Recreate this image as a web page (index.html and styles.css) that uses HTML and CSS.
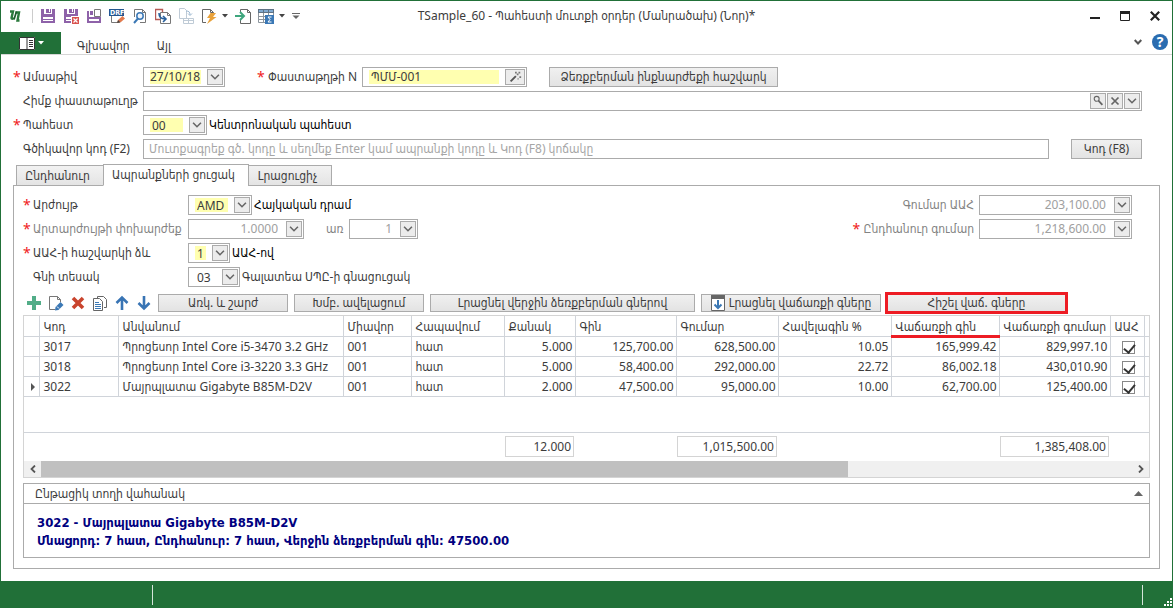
FILE: index.html
```html
<!DOCTYPE html>
<html lang="hy">
<head>
<meta charset="utf-8">
<meta name="viewport" content="width=device-width, initial-scale=1">
<title>TSample_60 - Պահեստի մուտքի օրդեր</title>
<link rel="stylesheet" href="styles.css">
</head>
<body>
<svg class="defs" aria-hidden="true">
  <symbol id="chev" viewBox="0 0 16 16"><path d="M3.500 5.500 8 10l4.500-4.500" fill="none" stroke="#666" stroke-width="1.800"/></symbol>
  <symbol id="floppy" viewBox="0 0 16 16"><path fill="#8e62a9" d="M1 1h3v5h8V1h3v14H1zM6 1h5v4H6z"/><path fill="#fff" d="M3 9h10v4H3zM9 1h1v3H9z"/><path stroke="#8e62a9" d="M3 11.500h10"/></symbol>
</svg>
<div class="window">
  <header class="titlebar">
    <div class="quick">
      <svg class="icon logo" viewBox="0 0 16 16"><path d="M3 3.500h3L4.500 10c0 1 1.500 1 2.500 0M8.500 4.500h3.500L10.500 12.500h2" fill="none" stroke="#2b7a3c" stroke-width="2.400"/><path d="m9.500 3.500-2.500 8" stroke="#1d5d2c" stroke-width="1.800"/></svg>
      <span class="sep"></span>
      <button class="tool" aria-label="Save"><svg class="icon"><use href="#floppy"/></svg></button>
      <button class="tool" aria-label="Save and close"><svg class="icon" viewBox="0 0 16 16"><use href="#floppy"/><path fill="#fff" d="M8 8h8v8H8z"/><path fill="#d9534f" d="M9 9h7v7H9z"/><path d="m10.500 10.500 4 4m0-4-4 4" stroke="#fff" stroke-width="1.200"/></svg></button>
      <button class="tool" aria-label="Save and new"><svg class="icon" viewBox="0 0 16 16"><path fill="#8e62a9" d="M1 3h2v6h12v6H1zM4 3h3v4H4z"/><path fill="#fff" d="M3 11h10v2H3z"/><path d="M8.500 1.500h6v7h-6z" fill="#fff" stroke="#777"/></svg></button>
      <button class="tool" aria-label="Draft"><svg class="icon" viewBox="0 0 16 16"><path d="M2.500 8v6.500h6" fill="none" stroke="#777"/><path fill="#24568f" d="M0 1h15v7H0z"/><text class="drf" x="1" y="7">DRF</text><path d="m8 15 1-3 4.500-4 2.500 2.500L12 14z" fill="#e27a4d"/><path d="m8 15 1-3 2.500 2.500z" fill="#444"/></svg></button>
      <button class="tool" aria-label="Preview"><svg class="icon" viewBox="0 0 16 16"><path d="M2.500 9V1.500h8l3 3v10H8" fill="#fff" stroke="#777"/><path d="M10.500 1.500v3h3" fill="none" stroke="#777"/><circle cx="8" cy="8" r="3.200" fill="#eef4fb" stroke="#3b78b5" stroke-width="1.500"/><path d="m6 10.500-4 4.500" stroke="#3b78b5" stroke-width="2"/></svg></button>
      <button class="tool" aria-label="Copy document"><svg class="icon" viewBox="0 0 16 16"><path d="M5 11.500H.5v-10h7V4" fill="none" stroke="#b65a55" stroke-width="1.400"/><path d="M5.500 4.500h7l3 3v8h-10z" fill="#fff" stroke="#777"/><path d="M12.500 4.500v3h3" fill="none" stroke="#777"/><path d="M4 5c0 4 2 6 6 6M8 8l3 3-3 3" fill="none" stroke="#28609c" stroke-width="1.600"/></svg></button>
      <button class="tool" aria-label="Linked documents" disabled><svg class="icon" viewBox="0 0 16 16"><g fill="none" stroke="#bfcbd6"><path d="M1.500 10.500v-10h5l2 2v8zM5.500 10.500h10v5h-10zM6 12.500h9M10.500 10v5"/><path d="M8 3c3 0 4 1 4 4m-2-1.500 2 2 2-2" stroke="#9eb9d2"/></g></svg></button>
      <button class="tool" aria-label="Actions"><svg class="icon" viewBox="0 0 16 16"><path d="M5 14.500H1.500V1.500h8l3 3v2" fill="#fff" stroke="#666"/><path d="M9.500 1.500v3h3" fill="none" stroke="#666"/><path d="M9.500 5H15l-3 4h3.500L6 16l3-6H6z" fill="#e9a23b"/></svg></button>
      <button class="arrow" aria-label="More actions"><svg class="caret" viewBox="0 0 6 4"><path d="M0 0h6L3 3.500z" fill="#444"/></svg></button>
      <button class="tool" aria-label="Export"><svg class="icon" viewBox="0 0 16 16"><path d="M5.500 4V1.500h7l3 3v11h-10V12" fill="none" stroke="#666"/><path d="M12.500 1.500v3h3" fill="none" stroke="#666"/><path d="M0 8h9M5 4l4 4-4 4" fill="none" stroke="#3ea67d" stroke-width="2"/></svg></button>
      <button class="tool" aria-label="Totals"><svg class="icon" viewBox="0 0 16 16"><path fill="#5f7284" d="M0 1h16v4H0z"/><path fill="none" stroke="#8d969e" d="M.5 5v9.500H7M1 8.500h6M1 11.500h6M5.500 5v9.500M10.500 5v2M15.500 5v2"/><path fill="#7fa9d0" d="M1 2h4v2H1zM6 2h4v2H6zM11 2h4v2h-4z"/><path fill="#3b78b5" d="M7 7h9v9H7z"/><path d="M13.500 9H10l2 2.500L10 14h3.500" fill="none" stroke="#fff"/></svg></button>
      <button class="arrow" aria-label="More totals"><svg class="caret" viewBox="0 0 6 4"><path d="M0 0h6L3 3.500z" fill="#444"/></svg></button>
      <button class="arrow" aria-label="Customize"><svg class="more" viewBox="0 0 8 6"><path d="M0 .5h8" stroke="#666"/><path d="M.5 2.500h7L4 6z" fill="#666"/></svg></button>
    </div>
    <h1 class="title">TSample_60 - Պահեստի մուտքի օրդեր (Մանրածախ) (Նոր)*</h1>
    <div class="winbtns">
      <button class="win" aria-label="Minimize"><svg viewBox="0 0 10 10"><path d="M0 6h10v2H0z" fill="#222"/></svg></button>
      <button class="win" aria-label="Maximize"><svg viewBox="0 0 10 10"><path d="M.5.5h9v9h-9z" fill="none" stroke="#222"/><path d="M0 0h10v3H0z" fill="#222"/></svg></button>
      <button class="win" aria-label="Close"><svg viewBox="0 0 10 10"><path d="m.8.8 8.400 8.400m0-8.400L.8 9.200" stroke="#222" stroke-width="2.200"/></svg></button>
    </div>
  </header>
  <nav class="ribbon">
    <button class="filemenu" aria-label="Menu"><svg viewBox="0 0 16 13"><path d="M0 0h16v13H0z" fill="#fff"/><path d="M8 0v13M10 3.500h4M10 5.500h4M10 7.500h4M10 9.500h4" stroke="#333" stroke-width="1"/><path d="M.5.5h15v12H.5z" fill="none" stroke="#333"/></svg><svg class="caret" viewBox="0 0 6 4"><path d="M0 0h6L3 3.500z" fill="#fff"/></svg></button>
    <a class="ribtab" href="#main">Գլխավոր</a>
    <a class="ribtab" href="#other">Այլ</a>
    <div class="ribright">
      <button class="plain" aria-label="Expand"><svg class="down" viewBox="0 0 8 7"><path d="m.7 1 3.300 3.500L7.300 1" fill="none" stroke="#555" stroke-width="2"/></svg></button>
      <button class="plain help" aria-label="Help">?</button>
    </div>
  </nav>
  <main class="content">
    <div class="form">
      <div class="row">
        <label class="lab req" for="date">Ամսաթիվ</label>
        <div class="combo w-date"><input class="val hot" id="date" value="27/10/18"><button class="drop" aria-label="Open"><svg><use href="#chev"/></svg></button></div>
        <label class="lab req doclab" for="num">Փաստաթղթի N</label>
        <div class="combo w-num"><input class="val hot wide" id="num" value="ՊՄՄ-001"><button class="drop wand" aria-label="Generate"><svg viewBox="0 0 16 16"><path d="m3 13 6-6" stroke="#555" stroke-width="2.200"/><path d="M8 2h2v2H8zM12 2h2v2h-2zM10 4h2v2h-2zM13 7h2v2h-2zM11 9h1v2h-1z" fill="#777"/></svg></button></div>
        <button class="btn cost">Ձեռքբերման ինքնարժեքի հաշվարկ</button>
      </div>
      <div class="row">
        <label class="lab" for="base">Հիմք փաստաթուղթ</label>
        <div class="combo grow"><input class="val" id="base"><button class="drop" aria-label="Search"><svg viewBox="0 0 16 16"><circle cx="6.500" cy="5.500" r="2.800" fill="none" stroke="#666" stroke-width="1.300"/><path d="m8.500 7.500 4.500 5" stroke="#666" stroke-width="2"/></svg></button><button class="drop" aria-label="Clear"><svg viewBox="0 0 16 16"><path d="m4 4 8 8m0-8-8 8" stroke="#666" stroke-width="2"/></svg></button><button class="drop" aria-label="Open"><svg><use href="#chev"/></svg></button></div>
      </div>
      <div class="row">
        <label class="lab req" for="store">Պահեստ</label>
        <div class="combo w-store"><select class="val hot" id="store"><option>00</option></select><button class="drop" aria-label="Open"><svg><use href="#chev"/></svg></button></div>
        <span class="desc">Կենտրոնական պահեստ</span>
      </div>
      <div class="row">
        <label class="lab" for="code">Գծիկավոր կոդ (F2)</label>
        <div class="combo grow"><input class="val" id="code" placeholder="Մուտքագրեք գծ. կոդը և սեղմեք Enter կամ ապրանքի կոդը և Կոդ (F8) կոճակը"></div>
        <button class="btn codebtn">Կոդ (F8)</button>
      </div>
    </div>
    <div class="tabs" role="tablist">
      <button class="tab" role="tab">Ընդհանուր</button>
      <button class="tab on" role="tab" aria-selected="true">Ապրանքների ցուցակ</button>
      <button class="tab" role="tab">Լրացուցիչ</button>
    </div>
    <section class="panel">
      <div class="fields">
        <div class="stack">
          <div class="row">
            <label class="lab req" for="cur">Արժույթ</label>
            <div class="combo w-cur"><select class="val hot" id="cur"><option>AMD</option></select><button class="drop" aria-label="Open"><svg><use href="#chev"/></svg></button></div>
            <span class="desc">Հայկական դրամ</span>
          </div>
          <div class="row">
            <label class="lab req dim" for="rate">Արտարժույթի փոխարժեք</label>
            <div class="combo w-rate"><input class="val num" id="rate" value="1.0000" disabled><button class="drop" aria-label="Open"><svg><use href="#chev"/></svg></button></div>
            <label class="per" for="per">առ</label>
            <div class="combo w-per"><input class="val num" id="per" value="1" disabled><button class="drop" aria-label="Open"><svg><use href="#chev"/></svg></button></div>
          </div>
          <div class="row">
            <label class="lab req" for="vat">ԱԱՀ-ի հաշվարկի ձև</label>
            <div class="combo w-vat"><select class="val hot" id="vat"><option>1</option></select><button class="drop" aria-label="Open"><svg><use href="#chev"/></svg></button></div>
            <span class="desc">ԱԱՀ-ով</span>
          </div>
          <div class="row">
            <label class="lab" for="price">Գնի տեսակ</label>
            <div class="combo w-price"><select class="val" id="price"><option>03</option></select><button class="drop" aria-label="Open"><svg><use href="#chev"/></svg></button></div>
            <span class="desc soft">Գալատեա ՍՊԸ-ի գնացուցակ</span>
          </div>
        </div>
        <div class="stack totals">
          <div class="row">
            <label class="sum dim" for="vatsum">Գումար ԱԱՀ</label>
            <div class="combo w-sum"><input class="val num" id="vatsum" value="203,100.00" disabled><button class="drop" aria-label="Open"><svg><use href="#chev"/></svg></button></div>
          </div>
          <div class="row">
            <label class="sum req dim" for="total">Ընդհանուր գումար</label>
            <div class="combo w-sum"><input class="val num" id="total" value="1,218,600.00" disabled><button class="drop" aria-label="Open"><svg><use href="#chev"/></svg></button></div>
          </div>
        </div>
      </div>
      <div class="toolbar">
        <div class="icons">
          <button class="tool" aria-label="Add"><svg class="icon" viewBox="0 0 16 16"><path d="M8 1v14M1 8h14" stroke="#52ad88" stroke-width="4"/></svg></button>
          <button class="tool" aria-label="Edit"><svg class="icon" viewBox="0 0 16 16"><path d="M7 14.500H1.500V1.500h8l3 3V7" fill="#fff" stroke="#777"/><path d="M9.500 1.500v3h3" fill="none" stroke="#777"/><path d="m7 15.500.5-3.500 5-5 3 3-5 5z" fill="#3b78b5"/><path d="m9 11.500 2 2" stroke="#fff"/></svg></button>
          <button class="tool" aria-label="Delete"><svg class="icon" viewBox="0 0 16 16"><path d="m3 3 10 10m0-10L3 13" stroke="#c9442d" stroke-width="3.600"/></svg></button>
          <button class="tool" aria-label="Copy"><svg class="icon" viewBox="0 0 16 16"><path d="M5.500 3V1.500h6l3 3v8H12" fill="none" stroke="#666"/><path d="M1.500 3.500h6l3 3v9h-9z" fill="#fff" stroke="#666"/><path d="M3 7.500h4M3 9.500h6M3 11.500h6M3 13.500h6" stroke="#3b78b5"/></svg></button>
          <button class="tool" aria-label="Up"><svg class="icon" viewBox="0 0 16 16"><path d="M8 15V3M2.500 8 8 2.500 13.500 8" fill="none" stroke="#3874b4" stroke-width="2.600"/></svg></button>
          <button class="tool" aria-label="Down"><svg class="icon" viewBox="0 0 16 16"><path d="M8 1v12M2.500 8 8 13.500 13.500 8" fill="none" stroke="#3874b4" stroke-width="2.600"/></svg></button>
        </div>
        <button class="btn b-sm">Առկ. և շարժ</button>
        <button class="btn b-sm">Խմբ. ավելացում</button>
        <button class="btn b-lg">Լրացնել վերջին ձեռքբերման գներով</button>
        <button class="btn b-md"><svg class="fill" viewBox="0 0 14 16"><path d="M.5.5h13v15H.5z" fill="#fff" stroke="#666"/><path d="M0 0h14v4H0z" fill="#666"/><path d="M7 5v8M3.500 9.500 7 13l3.500-3.500" fill="none" stroke="#3b78b5" stroke-width="2"/></svg>Լրացնել վաճառքի գները</button>
        <button class="btn marked">Հիշել վաճ. գները</button>
      </div>
      <div class="grid">
        <table class="table">
          <colgroup><col class="c-mark"><col class="c-code"><col><col class="c-unit"><col class="c-abbr"><col class="c-qty"><col class="c-price"><col class="c-sum"><col class="c-pct"><col class="c-sell"><col class="c-total"><col class="c-vat"><col class="c-rest"></colgroup>
          <thead>
            <tr><th></th><th>Կոդ</th><th>Անվանում</th><th>Միավոր</th><th>Հապավում</th><th>Քանակ</th><th>Գին</th><th>Գումար</th><th>Հավելագին %</th><th class="under">Վաճառքի գին</th><th>Վաճառքի գումար</th><th>ԱԱՀ</th><th></th></tr>
          </thead>
          <tbody>
            <tr><td></td><td>3017</td><td>Պրոցեսոր Intel Core i5-3470 3.2 GHz</td><td>001</td><td>հատ</td><td class="n">5.000</td><td class="n">125,700.00</td><td class="n">628,500.00</td><td class="n">10.05</td><td class="n">165,999.42</td><td class="n">829,997.10</td><td class="c"><input class="chk" type="checkbox" aria-label="ԱԱՀ 3017" checked></td><td></td></tr>
            <tr><td></td><td>3018</td><td>Պրոցեսոր Intel Core i3-3220 3.3 GHz</td><td>001</td><td>հատ</td><td class="n">5.000</td><td class="n">58,400.00</td><td class="n">292,000.00</td><td class="n">22.72</td><td class="n">86,002.18</td><td class="n">430,010.90</td><td class="c"><input class="chk" type="checkbox" aria-label="ԱԱՀ 3018" checked></td><td></td></tr>
            <tr><td class="c"><svg class="cur" viewBox="0 0 4 8"><path d="M0 0v8l4-4z" fill="#555"/></svg></td><td>3022</td><td>Մայրպլատա Gigabyte B85M-D2V</td><td>001</td><td>հատ</td><td class="n">2.000</td><td class="n">47,500.00</td><td class="n">95,000.00</td><td class="n">10.00</td><td class="n">62,700.00</td><td class="n">125,400.00</td><td class="c"><input class="chk" type="checkbox" aria-label="ԱԱՀ 3022" checked></td><td></td></tr>
            <tr class="blank"><td colspan="13"></td></tr>
          </tbody>
          <tfoot>
            <tr><td colspan="5"></td><td><div class="tot">12.000</div></td><td></td><td><div class="tot">1,015,500.00</div></td><td colspan="2"></td><td><div class="tot">1,385,408.00</div></td><td colspan="2"></td></tr>
          </tfoot>
        </table>
        <div class="scroll">
          <button class="plain sbtn" aria-label="Left"><svg viewBox="0 0 6 8"><path d="M5 .5 1.500 4 5 7.500" fill="none" stroke="#555" stroke-width="1.800"/></svg></button>
          <div class="track"><div class="thumb"></div></div>
          <button class="plain sbtn" aria-label="Right"><svg viewBox="0 0 6 8"><path d="M1 .5 4.500 4 1 7.500" fill="none" stroke="#555" stroke-width="1.800"/></svg></button>
        </div>
      </div>
      <section class="current">
        <div class="curhead"><span>Ընթացիկ տողի վահանակ</span><button class="plain" aria-label="Collapse"><svg class="tri" viewBox="0 0 9 5"><path d="M0 5h9L4.500 0z" fill="#666"/></svg></button></div>
        <div class="curbody">3022 - Մայրպլատա Gigabyte B85M-D2V<br>Մնացորդ: 7 հատ, Ընդհանուր: 7 հատ, Վերջին ձեռքբերման գին: 47500.00</div>
      </section>
    </section>
  </main>
  <footer class="status">
    <span class="bar"></span>
    <span class="bar"></span>
    <svg class="grip" viewBox="0 0 8 8"><path d="M6 0h2v2H6zM3 3h2v2H3zM6 3h2v2H6zM0 6h2v2H0zM3 6h2v2H3zM6 6h2v2H6z" fill="#fff"/></svg>
  </footer>
</div>
</body>
</html>
```
FILE: styles.css
```css
* { box-sizing: border-box; }
body { margin: 0; background: #fff; color: #3c3c3c; }
body, button, input, select { font: 12px/16px "Noto Sans", "DejaVu Sans Condensed", "DejaVu Sans", sans-serif; }
button, input, select { color: inherit; margin: 0; padding: 0; border: 0; background: none; }
svg { display: block; flex: none; }
.defs { display: none; }
.window { min-height: 100vh; display: flex; flex-direction: column; border: 1px solid #217038; border-bottom: 0; }

.titlebar { display: grid; grid-template-columns: 1fr auto 1fr; align-items: center; height: 30px; }
.quick { display: flex; align-items: center; gap: 7px; padding-left: 6px; }
.icon { width: 16px; height: 16px; }
.tool { width: 16px; height: 16px; flex: none; }
.sep { width: 1px; height: 14px; margin-left: 2px; background: #ccc; }
.arrow { width: 6px; display: flex; margin-left: -2px; }
.arrow:last-child { width: 8px; margin-left: 0; }
.caret { width: 6px; height: 4px; }
.more { width: 8px; height: 6px; }
.drf { font: bold 7px "DejaVu Sans Condensed", sans-serif; fill: #fff; }
.title { margin: 0; font-size: 12px; font-weight: 400; white-space: nowrap; }
.winbtns { display: flex; justify-content: flex-end; gap: 20px; padding-right: 12px; }
.win, .win svg { width: 10px; height: 10px; }

.ribbon { display: flex; align-items: flex-end; height: 24px; border-bottom: 1px solid #d6d6d6; }
.filemenu { width: 60px; height: 22px; display: flex; align-items: center; justify-content: center; gap: 3px; background: #217038; }
.filemenu svg:first-child { width: 16px; height: 13px; }
.ribtab { margin-left: 16px; padding-right: 11px; color: inherit; text-decoration: none; }
.ribright { margin-left: auto; display: flex; align-items: center; gap: 10px; padding: 0 4px 4px 0; }
.down { width: 8px; height: 7px; }
.help { width: 16px; height: 16px; border-radius: 50%; background: #2a6cb0; color: #fff; font-weight: 700; font-size: 14px; text-align: center; }

.content { flex: 1; display: flex; flex-direction: column; padding: 12px 12px; }
.form { display: flex; flex-direction: column; gap: 4px; padding-right: 18px; }
.row { display: flex; align-items: center; height: 20px; white-space: nowrap; }
.lab { flex: none; width: 130px; padding-left: 10px; position: relative; }
.req::before { content: "*"; position: absolute; left: 0; top: 0; color: #f02020; font-size: 14px; }
.doclab { width: 105px; margin-left: 32px; padding-left: 11px; }
.combo { flex: none; display: flex; align-items: center; gap: 1px; height: 20px; padding: 1px; border: 1px solid #ababab; background: #fff; }
.combo.grow { flex: 1; min-width: 0; }
.val { flex: 1; min-width: 0; height: 14px; margin: 0 4px; padding: 0; appearance: none; outline: 0; border-radius: 0; }
.hot { background: #ffffb0; margin: 0 5px; }
.combo select { padding: 0 2px; margin-left: 5px; }
.wide { margin-right: 5px; padding-left: 2px; }
.val::placeholder { color: #a6a6a6; opacity: 1; }
.num { text-align: right; margin-right: 7px; }
.val:disabled { color: #a0a0a0; }
.drop { flex: none; width: 16px; height: 16px; border: 1px solid #ababab; background: #ececec; display: flex; align-items: center; justify-content: center; }
.drop svg { width: 14px; height: 14px; }
.wand { width: 20px; }
.w-date { width: 82px; }
.w-num { width: 165px; }
.w-store { width: 64px; }
.w-cur { width: 64px; }
.w-rate { width: 116px; }
.w-per { width: 69px; }
.w-vat { width: 42px; }
.w-price { width: 52px; }
.w-sum { width: 153px; }
.desc { margin-left: 2px; color: #000; }
.soft { color: #3c3c3c; }
.dim, .per { color: #838383; }
.btn { display: flex; align-items: center; justify-content: center; gap: 4px; height: 20px; border: 1px solid #ababab; background: linear-gradient(#f0f0f0, #e3e3e3); white-space: nowrap; }
.cost { width: 229px; margin-left: 22px; }
.codebtn { width: 71px; margin-left: 22px; }

.tabs { display: flex; align-items: flex-end; height: 22px; margin: 5px 0 -1px 3px; position: relative; }
.tab { height: 21px; width: 88px; padding-right: 5px; border: 1px solid #ababab; background: linear-gradient(#f2f2f2, #e4e4e4); }
.tab + .tab { margin-left: -1px; }
.tab:last-child { width: 84px; }
.tab.on { width: 146px; height: 22px; background: #fff; border-bottom-color: #fff; }
.panel { flex: 1; display: flex; flex-direction: column; padding: 9px 9px 10px 9px; border: 1px solid #ababab; }
.fields { display: flex; justify-content: space-between; }
.stack { display: flex; flex-direction: column; gap: 4px; }
.stack .lab { width: 165px; }
.totals { margin-right: 18px; align-items: flex-end; }
.per { width: 45px; padding-left: 22px; }
.sum { position: relative; margin-right: 5px; padding-left: 11px; }

.toolbar { display: flex; align-items: center; gap: 6px; height: 22px; margin: 5px 0 1px; }
.toolbar .btn { height: 18px; }
.icons { display: flex; gap: 6px; width: 129px; padding-left: 3px; }
.b-sm { width: 130px; }
.b-lg { width: 265px; }
.b-md { width: 180px; }
.fill { width: 14px; height: 16px; }
.toolbar .marked { width: 183px; height: 22px; margin-left: -2px; border: 3px solid #ed1c24; }

.grid { border: 1px solid #d4d4d4; }
.table { width: 100%; table-layout: fixed; border-collapse: collapse; }
.table th, .table td { height: 20px; padding: 2px 4px 0; border: 1px solid #d0d4da; font-weight: 400; text-align: left; white-space: nowrap; line-height: 16px; }
.table tr > :first-child { border-left: 0; }
.table tr > :last-child { border-right: 0; }
.table th { border-top: 0; }
.table .n { text-align: right; padding-right: 2px; }
.table .c { padding: 2px 0 0 3px; text-align: center; }
.under { position: relative; }
.under::after { content: ""; position: absolute; left: -1px; right: -1px; bottom: -2px; height: 3px; background: #ed1c24; }
.table .blank td { height: 36px; }
.table tfoot td { height: 29px; padding: 0 1px; border: 0; }
.tot { height: 21px; padding-right: 2px; border: 1px solid #d4d4d4; text-align: right; line-height: 20px; }
.c-mark { width: 15px; }
.c-code { width: 79px; }
.c-unit { width: 68px; }
.c-abbr { width: 93px; }
.c-qty { width: 71px; }
.c-price { width: 101px; }
.c-sum { width: 102px; }
.c-pct { width: 113px; }
.c-sell { width: 108px; }
.c-total { width: 111px; }
.c-vat { width: 34px; }
.c-rest { width: 5px; }
.cur { width: 4px; height: 8px; margin: 0 auto; }
.chk { appearance: none; display: block; width: 13px; height: 13px; margin: 1px auto 0; border: 1px solid #888; }
.chk:checked::after { content: ""; display: block; width: 5px; height: 9px; margin: 0 0 0 3px; border: solid #333; border-width: 0 2px 2px 0; transform: rotate(40deg); }
.scroll { display: flex; height: 16px; background: #f0f0f0; }
.plain { display: flex; align-items: center; justify-content: center; }
.sbtn { width: 17px; }
.sbtn svg { width: 6px; height: 8px; }
.track { flex: 1; }
.thumb { width: 74%; height: 100%; background: #c0c0c0; }

.current { flex: 1; margin-top: 5px; border: 1px solid #ababab; }
.curhead { display: flex; justify-content: space-between; align-items: center; height: 20px; padding: 0 6px 0 11px; border-bottom: 1px solid #ababab; }
.tri { width: 9px; height: 5px; }
.curbody { padding: 10px 13px 5px; color: #000080; font-family: "DejaVu Sans Condensed", "DejaVu Sans", sans-serif; font-size: 13px; font-weight: 700; line-height: 18px; }

.status { flex: none; display: flex; justify-content: space-between; align-items: center; height: 27px; padding-left: 151px; background: #217038; }
.bar { width: 1px; height: 20px; background: #d5e5da; }
.bar + .bar { margin-left: auto; margin-right: 21px; }
.grip { width: 8px; height: 8px; align-self: flex-end; margin-bottom: 2px; }
```
